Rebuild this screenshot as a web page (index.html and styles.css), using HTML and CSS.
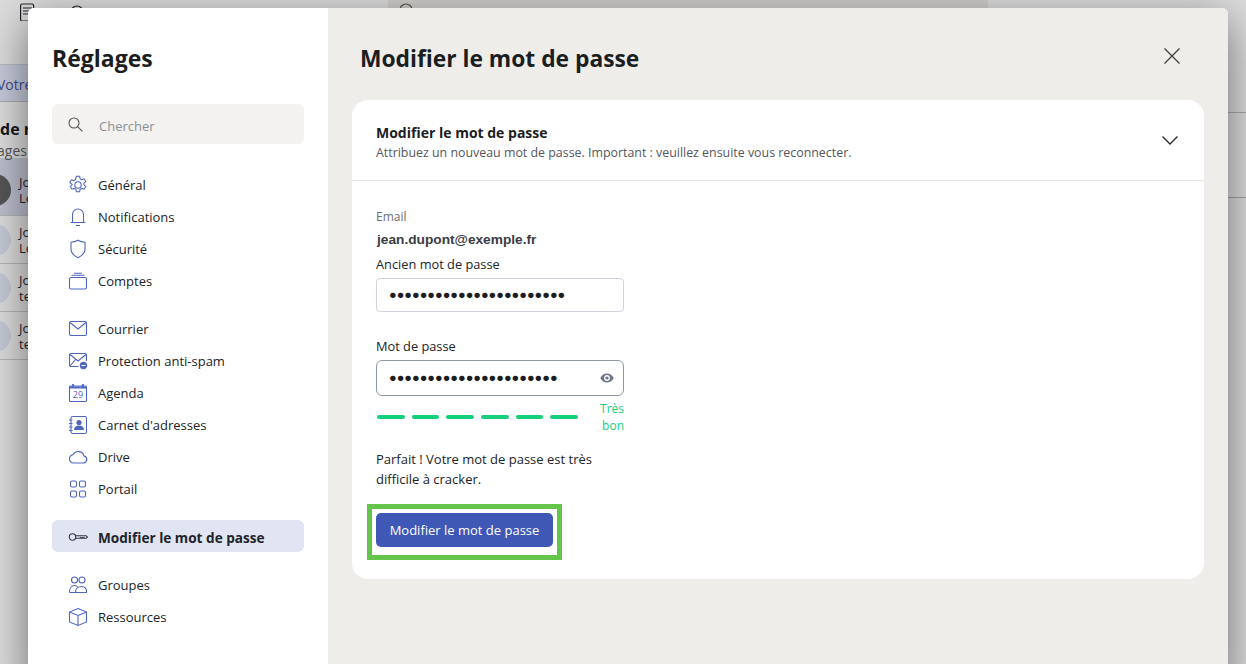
FILE: index.html

```html
<!DOCTYPE html>
<html lang="fr">
<head>
    <meta charset="UTF-8">
    <meta name="viewport" content="width=device-width, initial-scale=1.0">
    <title>Réglages</title>
    <link rel="stylesheet" href="styles.css">
</head>
<body>
    <!-- app behind the dialog -->
    <div class="app">
        <div class="app-top">
            <svg class="app-doc" width="16" height="18" viewBox="0 0 16 18" fill="none" stroke="#1f2329" stroke-width="1.2"><rect x="1.6" y="1" width="13" height="17" rx="1.5"/><path d="M4 5h9M4 8h9M4 11h5"/></svg>
            <svg class="app-find" width="14" height="14" viewBox="0 0 14 14" fill="none" stroke="#2a2c30" stroke-width="1.1"><circle cx="7" cy="7" r="6"/></svg>
            <span class="app-search">
                <svg width="16" height="16" viewBox="0 0 16 16" fill="none" stroke="#55524d" stroke-width="1.1"><circle cx="7" cy="7" r="6"/></svg>
            </span>
        </div>
        <div class="app-main">
            <div class="app-left">
                <div class="app-banner">Votre</div>
                <div class="app-heading">de r</div>
                <div class="app-sub">ages</div>
                <div class="app-row is-selected"><span class="app-avatar"></span><span class="app-row-text">Jo<br>Lo</span></div>
                <div class="app-row"><span class="app-avatar"></span><span class="app-row-text">Jo<br>Lo</span></div>
                <div class="app-row"><span class="app-avatar"></span><span class="app-row-text">Jo<br>te</span></div>
                <div class="app-row"><span class="app-avatar"></span><span class="app-row-text">Jo<br>te</span></div>
            </div>
            <div class="app-right"><div class="app-right-lines"></div></div>
        </div>
    </div>

    <div class="dialog">
        <aside class="sidebar">
            <h1 class="sidebar-title">Réglages</h1>
            <div class="search">
                <svg width="15" height="15" viewBox="0 0 15 15" fill="none" stroke="#55524d" stroke-width="1.1"><circle cx="6" cy="6" r="5"/><path d="M9.600 9.600l4.800 4.800"/></svg>
                <span>Chercher</span>
            </div>

            <nav class="nav-group">
                <a class="nav-item"><svg class="ico" viewBox="0 0 20 20"><path d="M8.400 1.200h3.200l.5 2.400 1.700 1 2.300-.8 1.600 2.800-1.800 1.600v1.600l1.800 1.600-1.600 2.800-2.300-.8-1.700 1-.5 2.400H8.400l-.5-2.400-1.700-1-2.300.8-1.600-2.800 1.800-1.600V9.200L1.800 7.600l1.600-2.800 2.300.8 1.700-1z"/><circle cx="10" cy="10" r="3.200"/></svg>Général</a>
                <a class="nav-item"><svg class="ico" viewBox="0 0 20 20"><path d="M2.500 15.500h15M4.500 15.500V7.500a5.500 5.500 0 0 1 11 0v8M8 18.500h4"/></svg>Notifications</a>
                <a class="nav-item"><svg class="ico" viewBox="0 0 20 20"><path d="M10 1.200c2 1.200 4.500 1.900 7 2v6.500c0 4-3 7-7 9-4-2-7-5-7-9V3.200c2.500-.1 5-.8 7-2z"/></svg>Sécurité</a>
                <a class="nav-item"><svg class="ico" viewBox="0 0 20 20"><rect x="1.500" y="6.500" width="17" height="11.500" rx="1.500"/><path d="M3.500 4.300h13M6 2.200h8"/></svg>Comptes</a>
            </nav>

            <nav class="nav-group">
                <a class="nav-item"><svg class="ico" viewBox="0 0 20 20"><rect x="1.500" y="2.500" width="17" height="14" rx="1.500"/><path d="M2 3.500l8 6.500 8-6.500"/></svg>Courrier</a>
                <a class="nav-item"><svg class="ico" viewBox="0 0 20 20"><path d="M10.500 15.500H3A1.500 1.500 0 0 1 1.500 14V4A1.500 1.500 0 0 1 3 2.500h14A1.500 1.500 0 0 1 18.500 4v6M2 3.500l8 6.500 8-6.500M2 15l5.500-6.500"/><circle class="ico-fill" cx="15.500" cy="14.500" r="3.700"/><path class="ico-cut" d="M13.500 14.500h4"/></svg>Protection anti-spam</a>
                <a class="nav-item"><svg class="ico" viewBox="0 0 20 20"><rect x="1.500" y="3" width="17" height="15.500" rx="1"/><path class="ico-thick" d="M1.500 4.500h17M5 1v2.500M15 1v2.500"/><text x="10" y="15" class="ico-date">29</text></svg>Agenda</a>
                <a class="nav-item"><svg class="ico" viewBox="0 0 20 20"><rect x="3" y="1.500" width="15.500" height="17" rx="1.500"/><path d="M1 5h3.500M1 8.500h3.500M1 12h3.500M1 15.500h3.500"/><circle class="ico-fill" cx="11" cy="7.500" r="2.600"/><path class="ico-fill" d="M6 15c0-3 2-4.500 5-4.500s5 1.500 5 4.500z"/></svg>Carnet d'adresses</a>
                <a class="nav-item"><svg class="ico" viewBox="0 0 20 20"><path d="M5 16h10.500a3.500 3.500 0 0 0 .6-6.900A6 6 0 0 0 5 7.700 4.200 4.200 0 0 0 5 16z"/></svg>Drive</a>
                <a class="nav-item"><svg class="ico" viewBox="0 0 20 20"><rect x="2.500" y="2" width="6" height="6" rx="1.500"/><rect x="11.500" y="2" width="6" height="6" rx="1.500"/><rect x="2.500" y="12" width="6" height="6" rx="1.500"/><rect x="11.500" y="12" width="6" height="6" rx="1.500"/></svg>Portail</a>
            </nav>

            <nav class="nav-group nav-group-active">
                <a class="nav-item is-active"><svg class="ico ico-dark" viewBox="0 0 20 20"><circle cx="4.500" cy="10" r="3.200"/><path d="M7.700 8.700h10.500l1.300 1.300-1.300 1.300h-1.500l-.8-.8-.8.8-.8-.8-.8.800-.8-.8-.8.8H7.700"/></svg>Modifier le mot de passe</a>
            </nav>

            <nav class="nav-group">
                <a class="nav-item"><svg class="ico" viewBox="0 0 20 20"><circle cx="6.500" cy="5" r="3"/><circle cx="14" cy="5" r="3"/><path d="M1.500 17.500c0-4 2-7 5-7 1.500 0 2.500.5 3.200 1.500M1.500 17.500h6M7.500 17.500c0-3.500 2.500-6 6-6s5.500 2.500 5 6z"/></svg>Groupes</a>
                <a class="nav-item"><svg class="ico" viewBox="0 0 20 20"><path d="M10 1.500l8.500 3.500v10L10 18.500 1.500 15V5zM1.500 5L10 8.500 18.500 5M10 8.500v10"/></svg>Ressources</a>
            </nav>
        </aside>

        <main class="content">
            <div class="content-head">
                <h2>Modifier le mot de passe</h2>
                <svg class="close" width="16" height="16" viewBox="0 0 16 16" fill="none" stroke="#3c3a36" stroke-width="1.2"><path d="M.5.500l15 15M15.500.500l-15 15"/></svg>
            </div>

            <section class="card">
                <header class="card-head">
                    <div>
                        <h3>Modifier le mot de passe</h3>
                        <p>Attribuez un nouveau mot de passe. Important : veuillez ensuite vous reconnecter.</p>
                    </div>
                    <svg class="card-chevron" width="16" height="9" viewBox="0 0 16 9" fill="none" stroke="#23262b" stroke-width="1.300"><path d="M.5.500L8 8l7.500-7.500"/></svg>
                </header>

                <form class="card-body">
                    <div class="field-email">Email</div>
                    <div class="field-value">jean.dupont@exemple.fr</div>
                    <label class="field-label">Ancien mot de passe</label>
                    <div class="input">&#9679;&#9679;&#9679;&#9679;&#9679;&#9679;&#9679;&#9679;&#9679;&#9679;&#9679;&#9679;&#9679;&#9679;&#9679;&#9679;&#9679;&#9679;&#9679;&#9679;&#9679;&#9679;&#9679;</div>
                    <label class="field-label field-label-new">Mot de passe</label>
                    <div class="input input-focus">
                        &#9679;&#9679;&#9679;&#9679;&#9679;&#9679;&#9679;&#9679;&#9679;&#9679;&#9679;&#9679;&#9679;&#9679;&#9679;&#9679;&#9679;&#9679;&#9679;&#9679;&#9679;&#9679;
                        <svg class="eye" width="14" height="10" viewBox="0 0 14 10"><path fill="#6c7686" d="M7 .5C4 .5 1.500 2.300.3 5c1.200 2.700 3.700 4.500 6.700 4.500s5.500-1.800 6.700-4.500C12.500 2.300 10 .5 7 .5zm0 7.400A2.900 2.900 0 1 1 7 2.100a2.900 2.900 0 0 1 0 5.800zM7 3.400a1.600 1.600 0 1 0 0 3.200 1.600 1.600 0 0 0 0-3.200z"/></svg>
                    </div>
                    <div class="strength">
                        <div class="strength-bars"><i></i><i></i><i></i><i></i><i></i><i></i></div>
                        <div class="strength-text">Très bon</div>
                    </div>
                    <p class="hint">Parfait ! Votre mot de passe est très difficile à cracker.</p>
                    <div class="btn-mark"><button type="button" class="btn">Modifier le mot de passe</button></div>
                </form>
            </section>
        </main>
    </div>
</body>
</html>
```

FILE: styles.css

```css
* {
    box-sizing: border-box;
}
html, body {
    height: 100%;
}
body {
    margin: 0;
    overflow: hidden;
    background-color: #dcdcdc;
    font-family: "Open Sans", "Noto Sans", sans-serif;
    color: #20232a;
}

/* dimmed app */
.app {
    height: 100%;
    font-size: 13px;
}
.app-top {
    height: 64px;
    padding-left: 19px;
    display: flex;
    align-items: flex-start;
}
.app-doc {
    margin-top: 3px;
}
.app-find {
    margin: 5px 0 0 35px;
}
.app-search {
    width: 600px;
    height: 8px;
    margin-left: 304px;
    padding: 3px 0 0 11px;
    overflow: hidden;
    background-color: #cfcecb;
}
.app-search svg {
    display: block;
}
.app-main {
    display: flex;
}
.app-left {
    flex: 1;
}
.app-right {
    width: 18px;
    padding-top: 48px;
}
.app-right-lines {
    height: 86px;
    border-top: 1px solid #a8a8a8;
    border-bottom: 1px solid #a0a0a0;
}
.app-banner {
    height: 38px;
    line-height: 40px;
    text-indent: -3px;
    font-size: 14px;
    color: #3f4d8f;
    background-color: #c6c9da;
    border-top: 1px solid #b8b8c0;
    border-bottom: 1px solid #aaa;
}
.app-heading {
    margin-top: 17px;
    height: 20px;
    font-size: 16px;
    line-height: 20px;
    font-weight: 700;
    color: #15171b;
}
.app-sub {
    height: 19px;
    line-height: 23px;
    font-size: 14px;
    text-indent: -3px;
    color: #55575c;
}
.app-row {
    height: 48px;
    display: flex;
    align-items: center;
    gap: 8px;
    margin-left: -21px;
    border-bottom: 1px solid #b5b5b5;
    line-height: 16px;
}
.app-row.is-selected {
    height: 58px;
    padding-top: 7px;
    background-color: #bcbecd;
}
.app-avatar {
    width: 32px;
    height: 32px;
    border-radius: 50%;
    background-color: #c6cad8;
}
.is-selected .app-avatar {
    background-color: #555;
}

/* dialog */
.dialog {
    position: absolute;
    left: 28px;
    top: 8px;
    width: 1200px;
    height: 680px;
    display: flex;
    border-radius: 6px;
    overflow: hidden;
    box-shadow: 0 12px 44px rgba(0, 0, 0, .5);
    background-color: #fff;
}
.sidebar {
    width: 300px;
    padding: 34px 24px 0;
    background-color: #fff;
}
.sidebar-title {
    margin: 0 0 30px;
    font-size: 23px;
    line-height: 32px;
    font-weight: 700;
    color: #1b1d21;
}
.search {
    height: 40px;
    display: flex;
    align-items: center;
    gap: 16px;
    padding-left: 16px;
    border-radius: 6px;
    background-color: #f3f2f0;
    font-size: 13px;
    color: #8b8f95;
}
.search span {
    padding-top: 4px;
}
.nav-group {
    margin-top: 16px;
}
.search + .nav-group {
    margin-top: 25px;
}
.nav-group-active {
    margin: 15px 0 17px;
}
.nav-item {
    height: 32px;
    display: flex;
    align-items: center;
    gap: 10px;
    padding-left: 16px;
    border-radius: 6px;
    font-size: 13px;
    color: #20232a;
}
.nav-item.is-active {
    padding-top: 2px;
    background-color: #e1e4f2;
    font-size: 13.600px;
    font-weight: 700;
}
.ico {
    width: 20px;
    height: 20px;
    flex: none;
    fill: none;
    stroke: #4f66c0;
    stroke-width: 1.1;
}
.ico-dark {
    stroke: #33363c;
}
.ico-fill {
    fill: #4f66c0;
    stroke: none;
}
.ico-cut {
    stroke: #fff;
}
.ico-thick {
    stroke-width: 1.800;
}
.ico-date {
    fill: #4f66c0;
    stroke: none;
    font-size: 9px;
    font-family: "Open Sans", sans-serif;
    text-anchor: middle;
}

/* right side */
.content {
    flex: 1;
    padding: 0 24px;
    background-color: #eeede9;
}
.content-head {
    height: 92px;
    padding: 8px 24px 0 8px;
    display: flex;
    align-items: center;
    justify-content: space-between;
}
.content-head h2 {
    margin: 0;
    font-size: 22.800px;
    font-weight: 700;
    color: #1b1d21;
}
.close {
    margin-bottom: 4px;
}
.card {
    height: 479px;
    border-radius: 16px;
    background-color: #fff;
}
.card-head {
    height: 81px;
    padding: 4px 26px 0 24px;
    display: flex;
    align-items: center;
    justify-content: space-between;
    border-bottom: 1px solid #e6e5e1;
}
.card-head h3 {
    margin: 0;
    font-size: 14px;
    line-height: 20px;
    font-weight: 700;
    color: #1b1d21;
}
.card-head p {
    margin: 2px 0 0;
    font-size: 12.400px;
    line-height: 16px;
    color: #55575c;
}
.card-chevron {
    margin-bottom: 3px;
}
.card-body {
    width: 272px;
    padding: 26px 0 0 24px;
}
.field-email {
    height: 20px;
    line-height: 20px;
    font-size: 12px;
    color: #6b6e75;
}
.field-value {
    height: 28px;
    line-height: 26px;
    padding-left: 1px;
    font-family: "Liberation Sans", Arial, sans-serif;
    font-size: 13.700px;
    font-weight: 700;
    color: #3a3c42;
}
.field-label {
    display: block;
    height: 23px;
    line-height: 18px;
    font-size: 12.800px;
    color: #20232a;
}
.field-label-new {
    margin-top: 25px;
}
.input {
    height: 34px;
    position: relative;
    display: flex;
    align-items: center;
    padding-left: 12px;
    border: 1px solid #ced2da;
    border-radius: 4px;
    font-family: "Liberation Sans", Arial, sans-serif;
    font-size: 12.700px;
    color: #1b1d21;
}
.input-focus {
    height: 36px;
    border-color: #8e97a8;
    border-radius: 6px;
}
.eye {
    position: absolute;
    right: 9px;
    top: 12px;
}
.strength {
    display: flex;
    align-items: flex-start;
    justify-content: space-between;
    margin-top: 4px;
}
.strength-bars {
    width: 202px;
    padding-left: 1px;
    margin-top: 15px;
    display: flex;
    gap: 6.800px;
}
.strength-bars i {
    width: 28px;
    height: 4px;
    border-radius: 2px;
    background-color: #16cf7b;
}
.strength-text {
    width: 30px;
    text-align: right;
    font-size: 12px;
    line-height: 17px;
    color: #16cf7b;
}
.hint {
    margin: 15px 0 0;
    font-size: 13px;
    line-height: 20px;
    color: #20232a;
}
.btn-mark {
    width: 195px;
    height: 56px;
    margin: 15px 0 0 -9px;
    padding: 4px;
    border: 5px solid #65c54a;
}
.btn {
    display: block;
    width: 177px;
    height: 34px;
    border: 0;
    padding: 0;
    border-radius: 5px;
    background-color: #3f58b5;
    font-family: inherit;
    font-size: 13px;
    color: #fff;
}
```
